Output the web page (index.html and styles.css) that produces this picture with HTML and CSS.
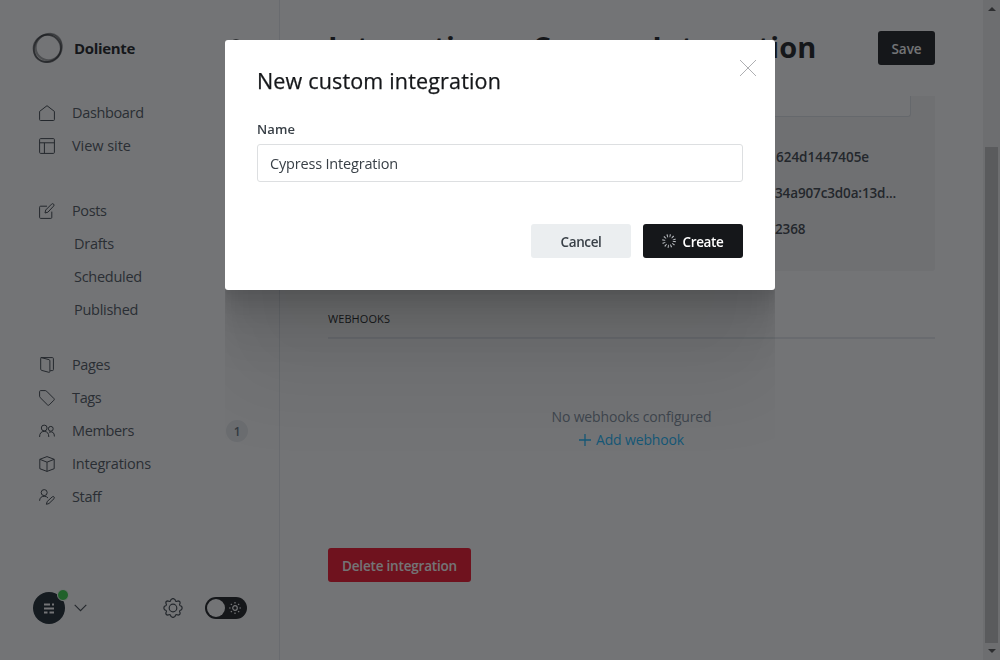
FILE: index.html
```html
<!DOCTYPE html>
<html lang="en">
<head>
<meta charset="utf-8">
<title>Integrations</title>
<link rel="stylesheet" href="styles.css">
</head>
<body>
<div class="app">
  <aside class="sidebar">
    <header class="brand">
      <svg class="brand-logo" width="32" height="32" viewBox="0 0 32 32" fill="none" stroke="#15171a"><circle cx="15.200" cy="16.400" r="13.600" stroke-width="1.800" stroke-opacity=".6"/><circle cx="16.600" cy="15.400" r="13" stroke-width="2.200" stroke-opacity=".4"/><ellipse cx="16" cy="15.800" rx="15" ry="12.800" stroke-width="1.800" stroke-opacity=".4" transform="rotate(-50 16 16)"/></svg>
      <span class="brand-name">Doliente</span>
      <svg class="search" width="18" height="18" viewBox="0 0 18 18" fill="none" stroke="#15171a" stroke-width="1.5"><circle cx="7" cy="7" r="6"/><path d="M11.5 11.5 17 17"/></svg>
    </header>
    <nav class="nav">
      <ul class="nav-group">
        <li><svg class="icon" viewBox="0 0 16 16"><path d="M.6 6.4 8 .7l7.4 5.7v8.2q0 .9-.9.9h-13q-.9 0-.9-.9z"/></svg><span>Dashboard</span></li>
        <li><svg class="icon" viewBox="0 0 16 16"><rect x=".6" y=".6" width="14.8" height="14.8" rx="1"/><path d="M.6 4.8h14.8M5.4 4.8v10.6"/></svg><span class="loose">View site</span></li>
      </ul>
      <ul class="nav-group">
        <li><svg class="icon" viewBox="0 0 16 16"><path d="M8 3.200H1.600q-1 0-1 1v10.200q0 1 1 1h10.200q1 0 1-1V8.600M6 10l.7-3L12.600 1.100q1-.9 2 0 1 1 0 2L8.900 9.200z"/></svg><span>Posts</span></li>
        <li class="sub"><span>Drafts</span></li>
        <li class="sub"><span>Scheduled</span></li>
        <li class="sub"><span>Published</span></li>
      </ul>
      <ul class="nav-group">
        <li><svg class="icon" viewBox="0 0 16 16"><path d="M1.700.6H13.400q1 0 1 1v11q0 1-1 1h-2.200M1.700 1.400q0-.9.9-.7l7.300 1.900q1 .3 1 1.200v10.700q0 1-1 .8l-7.200-1.900q-1-.3-1-1.200z"/></svg><span>Pages</span></li>
        <li><svg class="icon" viewBox="0 0 16 16"><path d="M.6 1.600q0-1 1-1h4.600q.8 0 1.400.6l7.300 7.300q.8.900 0 1.700l-4.700 4.700q-.8.8-1.700 0L1.200 7.600q-.6-.6-.6-1.400z"/></svg><span>Tags</span></li>
        <li><svg class="icon" viewBox="0 0 16 16"><circle cx="5.200" cy="5" r="2.900"/><circle cx="11.800" cy="5.800" r="2.400"/><path d="M.6 14q0-5.600 4.600-5.600T9.800 14M10 9.200q5.400-1.600 5.400 4.300"/></svg><span>Members</span><span class="count">1</span></li>
        <li><svg class="icon" viewBox="0 0 16 16"><path d="M8 .6l7.200 2.700v9.400L8 15.400.8 12.700V3.300zM.8 3.300 8 6.200l7.200-2.900M8 6.200v9.200"/></svg><span class="wide">Integrations</span></li>
        <li><svg class="icon" viewBox="0 0 16 16"><circle cx="5.200" cy="3.600" r="3"/><path d="M.6 11.800Q.8 7.300 5.200 7.300q2.600 0 3.800 1.700M7.400 15.300l.8-2.800 5-4.600q1-.8 1.800 0 .8.900 0 1.800l-5 4.800z"/></svg><span>Staff</span></li>
      </ul>
    </nav>
    <footer class="account">
      <div class="avatar">
        <svg class="avatar-mark" width="12" height="11" viewBox="0 0 12 11"><path d="M1 .5h6v2H1zM9 .5h2v2H9zM1 4.500h10v2H1zM1 8.500h3.500v2H1zM6.500 8.500H11v2H6.500z"/></svg>
        <span class="avatar-dot"></span>
      </div>
      <svg class="chevron" width="13" height="8" viewBox="0 0 13 8"><path d="M.7.9 6.500 6.700 12.300.9"/></svg>
      <svg class="gear" width="20" height="20" viewBox="0 0 20 20"><circle cx="10" cy="10" r="3.800"/><path d="M8 1.600q2-2 4 0l.5 1.200q.6.900 1.700.5l1-.4q2 .1 2 2l-.5 1.200q-.4 1.100.6 1.600l1.100.5q1.400 1.800 0 3.600l-1.100.5q-1 .5-.6 1.600l.5 1.200q0 1.900-2 2l-1-.4q-1.100-.4-1.700.5L12 18.400q-2 2-4 0l-.5-1.200q-.6-.9-1.700-.5l-1 .4q-2-.1-2-2l.5-1.200q.4-1.100-.6-1.600l-1.100-.5q-1.400-1.800 0-3.600l1.100-.5q1-.5.6-1.600l-.5-1.200q0-1.900 2-2l1 .4q1.100.4 1.700-.5z"/></svg>
      <div class="toggle"><span class="knob"></span>
        <svg width="12" height="12" viewBox="0 0 12 12" fill="none" stroke="#fff" stroke-width="1.200"><circle cx="6" cy="6" r="2.300"/><path d="M6 0v1.600M6 10.400V12M0 6h1.600M10.400 6H12M1.800 1.800l1.100 1.100M9.100 9.100l1.100 1.100M1.800 10.200l1.100-1.100M9.100 2.900l1.100-1.100"/></svg>
      </div>
    </footer>
  </aside>
  <main class="main">
    <header class="page-head">
      <h1 class="title"><span>Integrations</span><svg class="sep" width="8" height="12" viewBox="0 0 8 12"><path d="M1 1l5 5-5 5"/></svg><span>Cypress Integration</span></h1>
      <button class="btn btn-dark save"><span>Save</span></button>
    </header>
    <section class="details">
      <div class="field"></div>
      <p class="key">624d1447405e</p>
      <p class="key tight">34a907c3d0a:13d...</p>
      <p class="key tight">2368</p>
    </section>
    <h2 class="section-title">WEBHOOKS</h2>
    <section class="empty">
      <p>No webhooks configured</p>
      <a class="add"><svg width="12" height="12" viewBox="0 0 12 12"><path d="M6 0v12M0 6h12"/></svg><span>Add webhook</span></a>
    </section>
    <button class="btn btn-red"><span>Delete integration</span></button>
  </main>
  <div class="scrollbar"><i class="arrow up"></i><i class="thumb"></i><i class="arrow down"></i></div>
</div>
<div class="overlay">
  <div class="modal" role="dialog">
    <header class="modal-head">
      <h2>New custom integration</h2>
      <svg class="close" width="16" height="16" viewBox="0 0 16 16"><path d="M0 0l16 16M16 0 0 16"/></svg>
    </header>
    <label class="label">Name</label>
    <div class="input">Cypress Integration</div>
    <footer class="modal-foot">
      <button class="btn btn-grey"><span>Cancel</span></button>
      <button class="btn btn-dark create"><svg class="spinner" width="14" height="14" viewBox="-7 -7 14 14"><circle r="5.300"/></svg><span>Create</span></button>
    </footer>
  </div>
</div>
</body>
</html>
```
FILE: styles.css
```css
* { box-sizing: border-box; }
body { margin: 0; font-family: "Open Sans", "Noto Sans", sans-serif; font-size: 14px; color: #15171a; background: #fff; overflow: hidden; }
h1, h2, p, ul { margin: 0; padding: 0; font-weight: 400; }
ul { list-style: none; }
svg { display: block; fill: none; flex: none; }
.app { display: flex; width: 1000px; height: 660px; overflow: hidden; }
.sidebar { display: flex; flex-direction: column; width: 280px; border-right: 1px solid #e5e9ed; padding: 32px 32px 36px; }
.brand { display: flex; align-items: center; height: 32px; }
.brand-logo { margin-right: 10px; }
.brand-name { font-weight: 700; font-size: 15px; letter-spacing: -.33px; }
.search { margin-left: auto; }
.nav { margin-top: 32px; }
.nav-group { margin-bottom: 32px; }
.nav-group:nth-child(2) { margin-bottom: 22px; }
.nav-group:last-child { margin: 0; }
.nav li { display: flex; align-items: center; height: 33px; padding-left: 7px; font-size: 14.5px; letter-spacing: -.35px; color: #4a525a; }
.nav li.sub { padding-left: 42px; letter-spacing: -.28px; }
.nav .loose { letter-spacing: -.04px; }
.nav .wide { letter-spacing: -.21px; }
.icon { width: 16px; height: 16px; margin: 1px 17px 0 0; stroke: #394047; stroke-width: 1; stroke-linejoin: round; overflow: visible; }
.count { margin: 0 -1px 0 auto; width: 22px; height: 22px; border-radius: 11px; background: #ebeef0; font-size: 12px; font-weight: 600; line-height: 23px; text-align: center; color: #626d79; }
.account { display: flex; align-items: center; margin-top: auto; height: 32px; }
.avatar { position: relative; display: flex; align-items: center; justify-content: center; width: 32px; height: 32px; margin-left: 1px; border-radius: 50%; background: #15212a; }
.avatar-mark { fill: #fff; }
.avatar-dot { position: absolute; right: -4px; top: -3px; width: 12px; height: 12px; border-radius: 50%; background: #30cf43; border: 1px solid #fff; }
.chevron { margin-left: 9px; stroke: #394047; stroke-width: 1.1; }
.gear { margin-left: auto; stroke: #394047; stroke-width: 1.2; }
.toggle { display: flex; align-items: center; justify-content: space-between; width: 42px; height: 22px; margin-left: 22px; padding: 0 6px 0 2px; border-radius: 11px; background: #15171a; }
.knob { width: 18px; height: 18px; border-radius: 50%; background: #fff; }
.main { width: 703px; padding: 0 48px; }
.page-head { display: flex; align-items: center; justify-content: space-between; height: 96px; }
.title { display: flex; align-items: center; margin-top: -2px; font-weight: 700; font-size: 29px; line-height: 40px; letter-spacing: 0; white-space: nowrap; }
.sep { margin: 0 9px; stroke: #8e9cac; stroke-width: 2; }
.btn { display: flex; align-items: center; justify-content: center; height: 34px; border: 0; border-radius: 3px; padding: 2px 0 0; font: 600 13.5px "Open Sans", "Noto Sans", sans-serif; color: #fff; white-space: nowrap; }
.btn-dark { background: #15171a; }
.btn-red { background: #f50b23; width: 143px; margin-top: 98px; letter-spacing: -.19px; }
.btn-grey { background: #ebeef0; color: #394047; letter-spacing: -.37px; }
.create { letter-spacing: -.35px; }
.save { width: 57px; }
.details { height: 175px; padding: 0 24px; border-radius: 0 0 3px 3px; background: #f4f5f6; font-size: 13.5px; letter-spacing: .15px; color: #394047; font-weight: 600; }
.field { height: 21px; border: 1px solid #dde1e5; border-top: 0; border-radius: 0 0 3px 3px; background: #fff; margin-bottom: 22px; }
.key { height: 36px; line-height: 36px; padding-left: 424px; font-weight: 600; letter-spacing: -.02px; }
.key.tight { padding-left: 423px; letter-spacing: -.13px; }
.section-title { height: 68px; padding-top: 40px; border-bottom: 2px solid #e5e9ed; font-size: 11px; line-height: 16px; letter-spacing: .08px; }
.empty { padding-top: 66px; text-align: center; font-size: 14px; line-height: 23px; letter-spacing: -.15px; color: #7c8b9a; height: 111px; }
.add { display: flex; justify-content: center; align-items: center; gap: 5px; color: #14b8ff; }
.add svg { stroke: #14b8ff; stroke-width: 1.3; }
.scrollbar { display: flex; flex-direction: column; align-items: center; width: 17px; background: #f1f1f1; }
.arrow { border: 4px solid transparent; }
.up { margin-top: 3px; border-bottom-color: #505050; }
.down { margin-top: 6px; border-top-color: #505050; }
.thumb { width: 13px; height: 496px; margin-top: 136px; background: #c1c1c1; }
.overlay { position: fixed; inset: 0; padding-top: 40px; background: rgba(21, 23, 26, .6); }
.modal { width: 550px; height: 250px; margin: 0 auto; padding: 27px 32px 32px; border-radius: 3px; background: #fff; clip-path: inset(0 0 -370px 0);
  box-shadow: 0 3.8px 2.2px rgba(0,0,0,.028), 0 9.2px 5.3px rgba(0,0,0,.04), 0 17.3px 10px rgba(0,0,0,.05), 0 30.8px 17.9px rgba(0,0,0,.06), 0 57.7px 33.4px rgba(0,0,0,.06), 0 100px 80px rgba(0,0,0,.07); }
.modal-head { display: flex; justify-content: space-between; height: 51px; }
.modal-head h2 { font-size: 21.5px; line-height: 27px; font-weight: 500; letter-spacing: .17px; -webkit-text-stroke: .25px #15171a; }
.close { margin: -7px -13px 0 0; stroke: #8b8d90; stroke-width: .7; }
.label { display: block; font-size: 13px; font-weight: 600; line-height: 22px; height: 26px; letter-spacing: .09px; color: #394047; }
.input { height: 38px; padding: 0 12px; border: 1px solid #dddfe1; border-radius: 3px; line-height: 37px; font-size: 14.5px; letter-spacing: -.18px; color: #394047; }
.modal-foot { display: flex; justify-content: flex-end; gap: 12px; margin-top: 42px; }
.modal-foot .btn { width: 100px; }
.spinner { margin: -2px 6px 0 0; }
.spinner circle { stroke: #b9bcc0; stroke-width: 3; stroke-dasharray: 1 1.775; }
```
